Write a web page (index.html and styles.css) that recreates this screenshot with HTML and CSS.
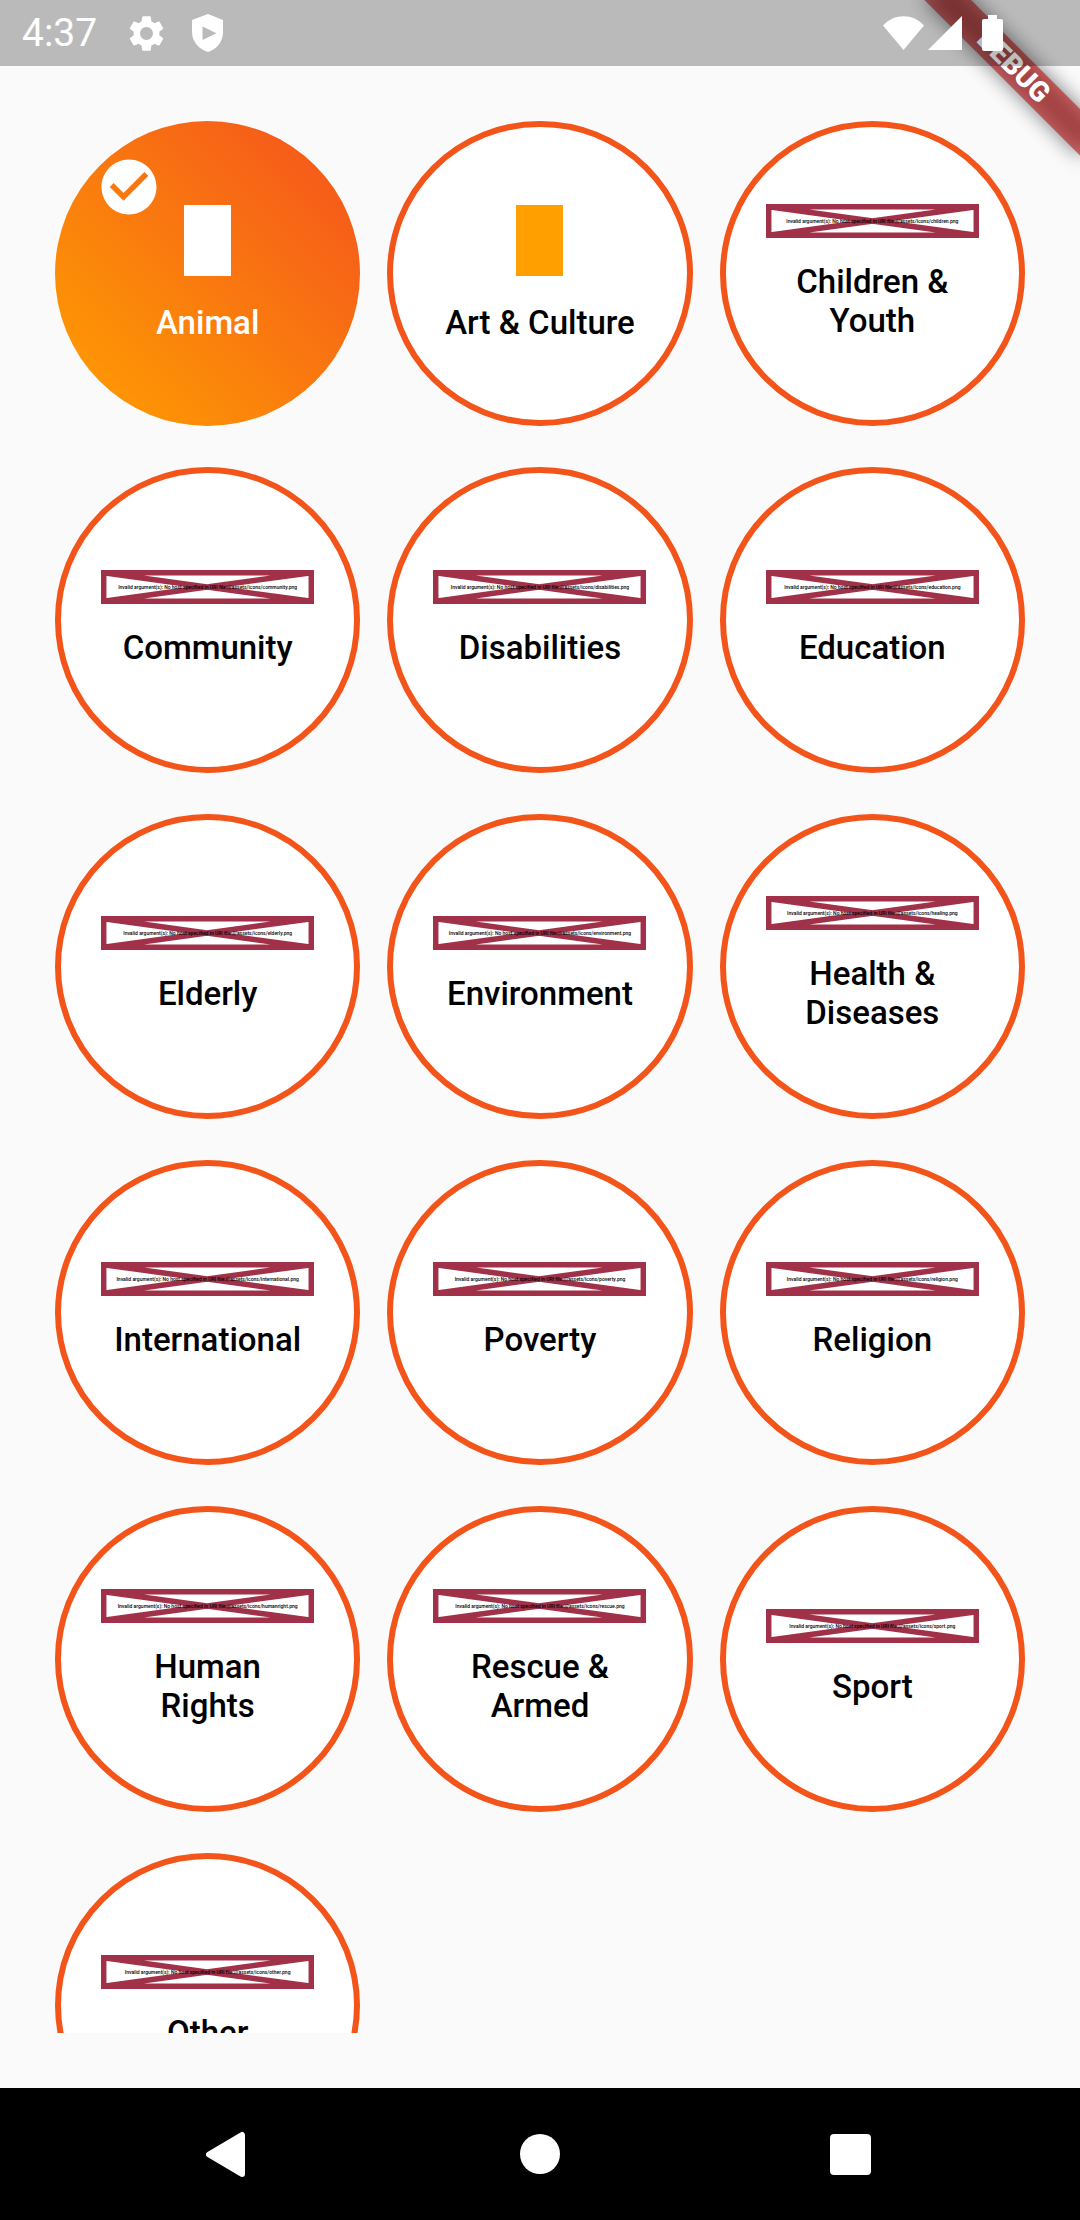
FILE: index.html
```html
<!DOCTYPE html>
<html lang="en">
<head>
<meta charset="utf-8">
<meta name="viewport" content="width=device-width, initial-scale=1">
<title>Categories</title>
<link rel="stylesheet" href="styles.css">
</head>
<body>
<svg class="defs" aria-hidden="true">
  <symbol id="missing" viewBox="0 0 213 34">
    <path d="M2.7 2.7H210.3V31.3H2.7ZM2.7 2.7L210.3 31.3M210.3 2.7L2.7 31.3" fill="none" stroke="#a13049" stroke-width="5.5"/>
  </symbol>
</svg>

<header class="status">
  <time class="clock">4:37</time>
  <svg class="status-gear" viewBox="0 0 24 24" aria-hidden="true"><path fill="#fff" d="M19.14 12.94c.04-.3.06-.61.06-.94 0-.32-.02-.64-.07-.94l2.03-1.58c.18-.14.23-.41.12-.61l-1.92-3.32c-.12-.22-.37-.29-.59-.22l-2.39.96c-.5-.38-1.03-.7-1.62-.94L14.4 2.81c-.04-.24-.24-.41-.48-.41h-3.84c-.24 0-.43.17-.47.41l-.36 2.54c-.59.24-1.13.57-1.62.94l-2.39-.96c-.22-.08-.47 0-.59.22L2.74 8.87c-.12.21-.08.47.12.61l2.03 1.58c-.05.3-.09.63-.09.94s.02.64.07.94l-2.03 1.58c-.18.14-.23.41-.12.61l1.92 3.32c.12.22.37.29.59.22l2.39-.96c.5.38 1.03.7 1.62.94l.36 2.54c.05.24.24.41.48.41h3.84c.24 0 .44-.17.47-.41l.36-2.54c.59-.24 1.13-.56 1.62-.94l2.39.96c.22.08.47 0 .59-.22l1.92-3.32c.12-.22.07-.47-.12-.61zM12 15.6c-1.98 0-3.6-1.62-3.6-3.6s1.62-3.6 3.6-3.6 3.6 1.62 3.6 3.6-1.62 3.6-3.6 3.6z"/></svg>
  <svg class="status-shield" viewBox="0 0 32 38" aria-hidden="true"><path fill="#fff" fill-rule="evenodd" d="M16 0L31 6V18C31 28 24.500 35.500 16 38C7.500 35.500 0 28 0 18V6ZM10.500 12.500V26L24.500 19.200Z"/></svg>
  <span class="status-spacer"></span>
  <svg class="status-wifi" viewBox="0 0 41 34" aria-hidden="true"><path fill="#fff" d="M20.500 34L0 9.500C11-3 30-3 41 9.500Z"/></svg>
  <svg class="status-signal" viewBox="0 0 34 34" aria-hidden="true"><path fill="#fff" d="M0 34L34 0V34Z"/></svg>
  <svg class="status-battery" viewBox="0 0 21 36" aria-hidden="true"><path fill="#fff" d="M6 0H15V4H19Q21 4 21 6V34Q21 36 19 36H2Q0 36 0 34V6Q0 4 2 4H6Z"/></svg>
</header>

<div class="banner"><div class="ribbon"><span class="ribbon-text">DEBUG</span></div></div>

<main class="content">
  <div class="grid">
    <button class="card card-selected" aria-pressed="true">
      <svg class="check" viewBox="0 0 24 24" aria-hidden="true"><path fill="#fff" d="M12 2C6.480 2 2 6.480 2 12s4.480 10 10 10 10-4.480 10-10S17.520 2 12 2zm-2 15l-5-5 1.410-1.410L10 14.170l7.590-7.590L19 8l-9 9z"/></svg>
      <span class="glyph"></span><span class="label">Animal</span>
    </button>
    <button class="card" aria-pressed="false"><span class="glyph"></span><span class="label">Art &amp; Culture</span></button>
    <button class="card card-missing" aria-pressed="false"><span class="missing"><svg class="frame"><use href="#missing"/></svg><span class="error">Invalid argument(s): No host specified in URI file:///assets/icons/children.png</span></span><span class="label">Children &amp; Youth</span></button>
    <button class="card card-missing" aria-pressed="false"><span class="missing"><svg class="frame"><use href="#missing"/></svg><span class="error">Invalid argument(s): No host specified in URI file:///assets/icons/community.png</span></span><span class="label">Community</span></button>
    <button class="card card-missing" aria-pressed="false"><span class="missing"><svg class="frame"><use href="#missing"/></svg><span class="error">Invalid argument(s): No host specified in URI file:///assets/icons/disabilities.png</span></span><span class="label">Disabilities</span></button>
    <button class="card card-missing" aria-pressed="false"><span class="missing"><svg class="frame"><use href="#missing"/></svg><span class="error">Invalid argument(s): No host specified in URI file:///assets/icons/education.png</span></span><span class="label">Education</span></button>
    <button class="card card-missing" aria-pressed="false"><span class="missing"><svg class="frame"><use href="#missing"/></svg><span class="error">Invalid argument(s): No host specified in URI file:///assets/icons/elderly.png</span></span><span class="label">Elderly</span></button>
    <button class="card card-missing" aria-pressed="false"><span class="missing"><svg class="frame"><use href="#missing"/></svg><span class="error">Invalid argument(s): No host specified in URI file:///assets/icons/environment.png</span></span><span class="label">Environment</span></button>
    <button class="card card-missing" aria-pressed="false"><span class="missing"><svg class="frame"><use href="#missing"/></svg><span class="error">Invalid argument(s): No host specified in URI file:///assets/icons/healing.png</span></span><span class="label">Health &amp; Diseases</span></button>
    <button class="card card-missing" aria-pressed="false"><span class="missing"><svg class="frame"><use href="#missing"/></svg><span class="error">Invalid argument(s): No host specified in URI file:///assets/icons/international.png</span></span><span class="label">International</span></button>
    <button class="card card-missing" aria-pressed="false"><span class="missing"><svg class="frame"><use href="#missing"/></svg><span class="error">Invalid argument(s): No host specified in URI file:///assets/icons/poverty.png</span></span><span class="label">Poverty</span></button>
    <button class="card card-missing" aria-pressed="false"><span class="missing"><svg class="frame"><use href="#missing"/></svg><span class="error">Invalid argument(s): No host specified in URI file:///assets/icons/religion.png</span></span><span class="label">Religion</span></button>
    <button class="card card-missing" aria-pressed="false"><span class="missing"><svg class="frame"><use href="#missing"/></svg><span class="error">Invalid argument(s): No host specified in URI file:///assets/icons/humanright.png</span></span><span class="label">Human Rights</span></button>
    <button class="card card-missing" aria-pressed="false"><span class="missing"><svg class="frame"><use href="#missing"/></svg><span class="error">Invalid argument(s): No host specified in URI file:///assets/icons/rescue.png</span></span><span class="label">Rescue &amp; Armed</span></button>
    <button class="card card-missing" aria-pressed="false"><span class="missing"><svg class="frame"><use href="#missing"/></svg><span class="error">Invalid argument(s): No host specified in URI file:///assets/icons/sport.png</span></span><span class="label">Sport</span></button>
    <button class="card card-missing" aria-pressed="false"><span class="missing"><svg class="frame"><use href="#missing"/></svg><span class="error">Invalid argument(s): No host specified in URI file:///assets/icons/other.png</span></span><span class="label">Other</span></button>
  </div>
</main>

<nav class="nav">
  <button class="nav-button" aria-label="Back"><svg class="nav-icon" viewBox="0 0 48 48" aria-hidden="true"><path fill="#fff" stroke="#fff" stroke-width="6" stroke-linejoin="round" d="M3 24.500L36 5V44Z"/></svg></button>
  <button class="nav-button" aria-label="Home"><svg class="nav-icon" viewBox="0 0 48 48" aria-hidden="true"><circle cx="24" cy="24" r="20" fill="#fff"/></svg></button>
  <button class="nav-button" aria-label="Recent apps"><svg class="nav-icon" viewBox="0 0 48 48" aria-hidden="true"><rect x="4" y="4" width="41" height="41" rx="4" fill="#fff"/></svg></button>
</nav>
</body>
</html>
```
FILE: styles.css
```css
* {
  box-sizing: border-box;
}

body {
  margin: 0;
  height: 100vh;
  display: flex;
  flex-direction: column;
  position: relative;
  overflow: hidden;
  background: #fafafa;
  font-family: Roboto, "Liberation Sans", sans-serif;
}

button {
  margin: 0;
  padding: 0;
  border: 0;
  background: none;
  font: inherit;
  color: inherit;
}

svg {
  display: block;
  flex: none;
}

.defs {
  position: absolute;
  width: 0;
  height: 0;
}

/* Status bar */
.status {
  position: relative;
  z-index: 2;
  flex: none;
  display: flex;
  align-items: center;
  height: 66px;
  padding: 0 77px 0 22px;
  background: rgba(0, 0, 0, 0.255);
  color: #fff;
}

.clock {
  font-size: 39px;
  line-height: 46px;
}

.status-gear {
  width: 43px;
  height: 43px;
  margin-left: 28px;
}

.status-shield {
  width: 32px;
  height: 38px;
  margin-left: 24px;
}

.status-spacer {
  flex: 1;
}

.status-wifi {
  width: 41px;
  height: 34px;
  margin-right: 4px;
}

.status-signal {
  width: 34px;
  height: 34px;
  margin-right: 20px;
}

.status-battery {
  width: 21px;
  height: 36px;
}

/* Corner ribbon, turned about the top right corner */
.banner {
  position: absolute;
  z-index: 1;
  top: 0;
  right: 0;
  width: 220px;
  height: 220px;
  overflow: hidden;
  pointer-events: none;
}

.ribbon {
  position: absolute;
  top: 77px;
  right: -110px;
  width: 220px;
  height: 33px;
  transform-origin: 110px -77px;
  transform: rotate(45deg);
}

.ribbon::before {
  content: "";
  position: absolute;
  inset: 0;
  background: rgba(0, 0, 0, 0.5);
  filter: blur(10px);
}

.ribbon-text {
  position: relative;
  display: block;
  background: rgba(183, 28, 28, 0.627);
  color: #fff;
  font-size: 28px;
  font-weight: 900;
  line-height: 33px;
  text-align: center;
}

/* Category grid */
.content {
  flex: 1;
  min-height: 0;
  padding: 55px;
}

.grid {
  height: 100%;
  overflow-y: auto;
  scrollbar-width: none;
  display: grid;
  grid-template-columns: repeat(3, minmax(0, 1fr));
  grid-auto-rows: max-content;
  gap: 41px 27px;
}

.card {
  position: relative;
  display: flex;
  flex-direction: column;
  align-items: center;
  justify-content: center;
  aspect-ratio: 1;
  border: 6px solid #f3541a;
  border-radius: 50%;
  background: #fff;
  color: #000;
}

.card-selected {
  border: 0;
  background: linear-gradient(to top right, #ffa000, #f4511e);
  color: #fff;
}

.card-missing {
  padding-bottom: 4px;
}

.check {
  position: absolute;
  top: 33px;
  left: 41px;
  width: 66px;
  height: 66px;
}

.glyph {
  width: 47px;
  height: 71px;
  margin-bottom: 27px;
  background: #ffa000;
}

.card-selected .glyph {
  background: #fff;
}

.label {
  max-width: 200px;
  font-size: 33px;
  font-weight: 500;
  line-height: 39px;
  text-align: center;
}

.missing {
  display: grid;
  place-items: center;
  width: 213px;
  height: 34px;
  margin-bottom: 24px;
}

.frame,
.error {
  grid-area: 1 / 1;
}

.frame {
  width: 213px;
  height: 34px;
}

.error {
  position: relative;
  font-size: 5px;
  font-weight: 500;
  line-height: 6px;
  white-space: nowrap;
}

/* Navigation bar */
.nav {
  flex: none;
  display: flex;
  height: 132px;
  padding: 0 75px;
  background: #000;
}

.nav-button {
  flex: 1;
  display: flex;
  align-items: center;
  justify-content: center;
}

.nav-icon {
  width: 48px;
  height: 48px;
}
```
